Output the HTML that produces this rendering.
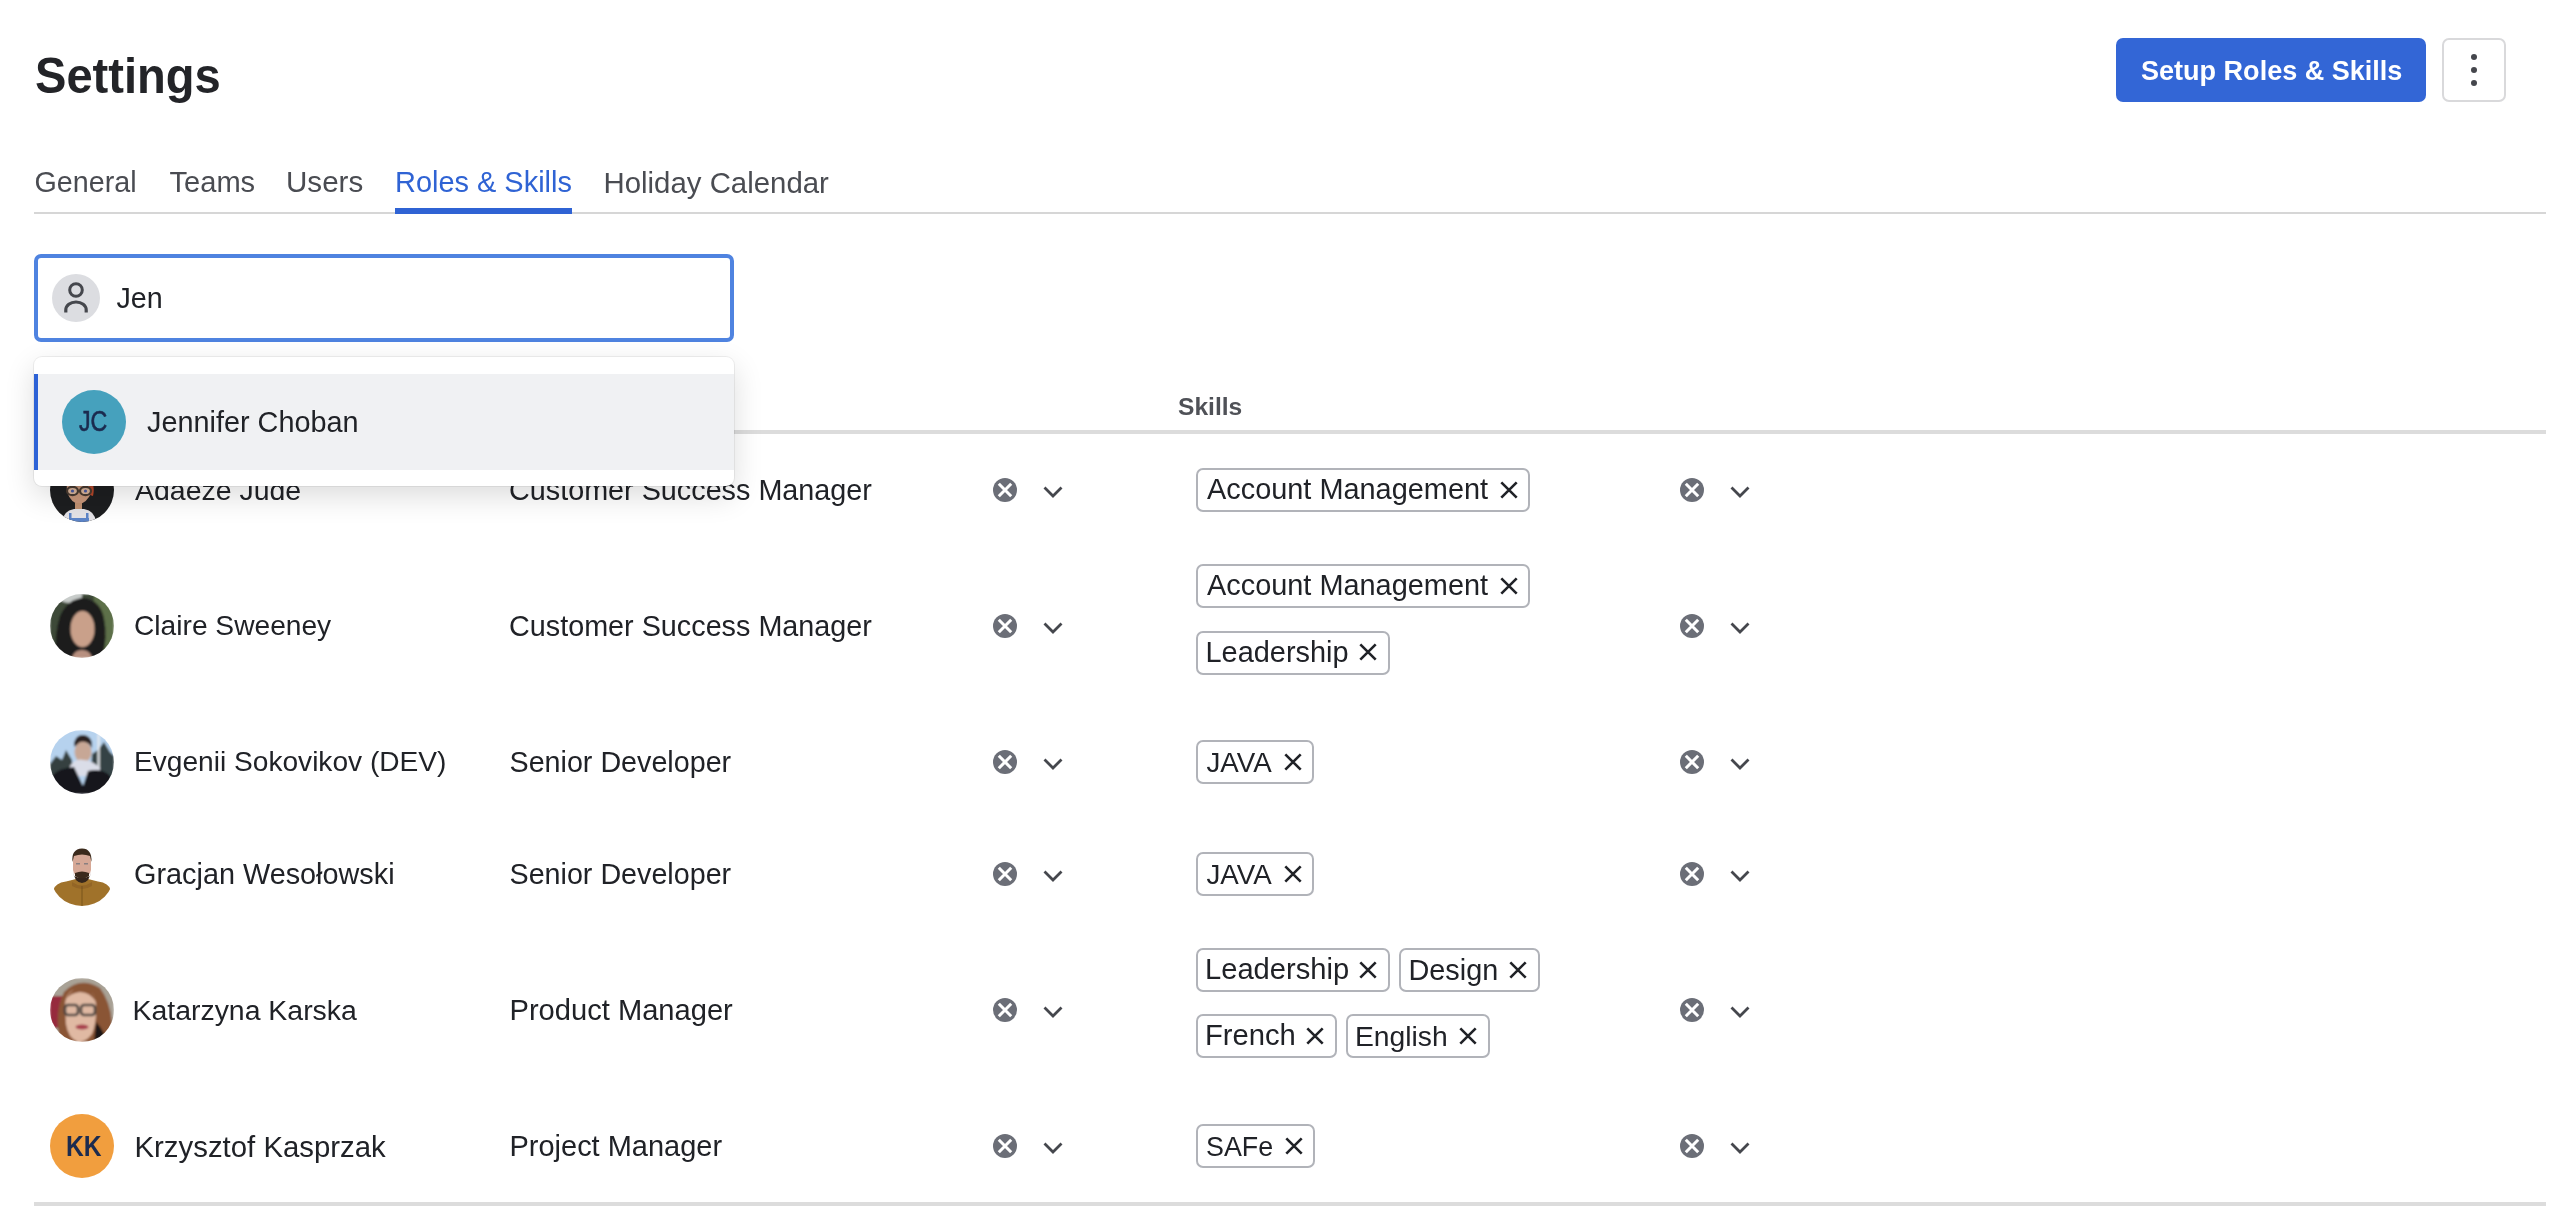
<!DOCTYPE html>
<html>
<head>
<meta charset="utf-8">
<style>
html,body{margin:0;padding:0;background:#fff;}
body{-webkit-font-smoothing:antialiased;will-change:transform;width:2573px;height:1224px;position:relative;overflow:hidden;font-family:"Liberation Sans",sans-serif;color:#202227;}
.a{position:absolute;white-space:nowrap;}
.tag{position:absolute;box-sizing:border-box;height:44px;border:2px solid #b1b3b9;border-radius:7px;background:#fff;}
</style>
</head>
<body>
<div class="a" id="k0" style="left:34.50px;top:45.65px;font-size:49.50px;line-height:59px;color:#232428;font-weight:bold;transform:scaleX(0.951);transform-origin:0 0;">Settings</div>
<div class="a" style="left:2116px;top:38px;width:310px;height:64px;background:#3366d6;border-radius:7px;"></div>
<div class="a" id="k1" style="left:2141.00px;top:54.63px;font-size:27.04px;line-height:32px;color:#ffffff;font-weight:bold;">Setup Roles &amp; Skills</div>
<div class="a" style="left:2442px;top:38px;width:64px;height:64px;box-sizing:border-box;border:2px solid #d9d9db;border-radius:7px;background:#fff;"></div>
<div class="a" style="left:2471px;top:54px;width:6px;height:6px;border-radius:50%;background:#45474d;"></div>
<div class="a" style="left:2471px;top:67px;width:6px;height:6px;border-radius:50%;background:#45474d;"></div>
<div class="a" style="left:2471px;top:80px;width:6px;height:6px;border-radius:50%;background:#45474d;"></div>
<div class="a" id="k2" style="left:34.50px;top:165.35px;font-size:28.71px;line-height:34px;color:#4a4c52;">General</div>
<div class="a" id="k3" style="left:169.50px;top:164.72px;font-size:29.09px;line-height:35px;color:#4a4c52;">Teams</div>
<div class="a" id="k4" style="left:286.00px;top:164.05px;font-size:29.59px;line-height:36px;color:#4a4c52;">Users</div>
<div class="a" id="k5" style="left:395.00px;top:164.77px;font-size:28.94px;line-height:35px;color:#2f63d4;">Roles &amp; Skills</div>
<div class="a" id="k6" style="left:603.50px;top:164.62px;font-size:29.38px;line-height:35px;color:#4a4c52;">Holiday Calendar</div>
<div class="a" style="left:34px;top:212px;width:2512px;height:2px;background:#d6d6d6;"></div>
<div class="a" style="left:395px;top:208px;width:177px;height:6px;background:#2f63d4;"></div>
<div class="a" id="k7" style="left:1178.00px;top:392.48px;font-size:24.58px;line-height:29px;color:#4f5157;font-weight:bold;">Skills</div>
<div class="a" style="left:34px;top:430px;width:2512px;height:4px;background:#dcdcdc;"></div>
<div class="a" style="left:34px;top:1202px;width:2512px;height:4px;background:#dcdcdc;"></div>
<svg class="a" style="left:50px;top:458px;" width="64" height="64" viewBox="0 0 64 64"><defs><clipPath id="c1"><circle cx="32" cy="32" r="32"/></clipPath><filter id="b1"><feGaussianBlur stdDeviation="0.7"/></filter></defs><g clip-path="url(#c1)"><rect width="64" height="64" fill="#1d1e20"/><g filter="url(#b1)"><path d="M16 10 Q29 0 42 10 L41.5 34 Q37 45 29 46 Q21 45 17 34 Z" fill="#c8967a"/><path d="M37 22 Q46 24 43 38 L40 37 Q42 28 35 25Z" fill="#b5462a"/><ellipse cx="22.5" cy="33" rx="5.5" ry="4.2" fill="#d9b49a" stroke="#4a3a30" stroke-width="2.2"/><ellipse cx="35.5" cy="33" rx="5.5" ry="4.2" fill="#d9b49a" stroke="#4a3a30" stroke-width="2.2"/><circle cx="22.5" cy="33" r="1.6" fill="#4a5aa0"/><circle cx="35.5" cy="33" r="1.6" fill="#4a5aa0"/><rect x="25" y="45" width="7" height="7" fill="#c09070"/><path d="M12 64 Q13 53 24 51 L34 51 Q45 53 46 64 Z" fill="#e4e2e6"/><rect x="19" y="60" width="20" height="4" fill="#5b84c8"/><rect x="19" y="55" width="2.5" height="6" fill="#5b84c8"/><rect x="36" y="55" width="2.5" height="6" fill="#5b84c8"/></g></g></svg>
<div class="a" id="k8" style="left:135.00px;top:473.34px;font-size:28.46px;line-height:34px;color:#202227;">Adaeze Jude</div>
<div class="a" id="k9" style="left:509.00px;top:472.73px;font-size:28.78px;line-height:35px;color:#202227;">Customer Success Manager</div>
<svg class="a" style="left:993.0px;top:478.0px;" width="24" height="24" viewBox="0 0 24 24"><circle cx="12" cy="12" r="12" fill="#6b6e77"/><path d="M5.8 5.8L18.2 18.2M18.2 5.8L5.8 18.2" stroke="#fff" stroke-width="3"/></svg>
<svg class="a" style="left:1041.0px;top:484.0px;" width="24" height="16" viewBox="0 0 24 16"><path d="M3.5 3.5L12 12L20.5 3.5" fill="none" stroke="#45474d" stroke-width="2.8"/></svg>
<svg class="a" style="left:1680.0px;top:478.0px;" width="24" height="24" viewBox="0 0 24 24"><circle cx="12" cy="12" r="12" fill="#6b6e77"/><path d="M5.8 5.8L18.2 18.2M18.2 5.8L5.8 18.2" stroke="#fff" stroke-width="3"/></svg>
<svg class="a" style="left:1728.0px;top:484.0px;" width="24" height="16" viewBox="0 0 24 16"><path d="M3.5 3.5L12 12L20.5 3.5" fill="none" stroke="#45474d" stroke-width="2.8"/></svg>
<div class="tag" style="left:1196.0px;top:468.0px;width:334.0px;"></div>
<div class="a" id="k10" style="left:1207.00px;top:472.49px;font-size:28.90px;line-height:35px;color:#202227;">Account Management</div>
<svg class="a" style="left:1499.8px;top:480.8px;" width="18" height="18" viewBox="0 0 18 18"><path d="M1.3 1.3L16.7 16.7M16.7 1.3L1.3 16.7" stroke="#202227" stroke-width="2.6"/></svg>
<svg class="a" style="left:50px;top:594px;" width="64" height="64" viewBox="0 0 64 64"><defs><clipPath id="c2"><circle cx="32" cy="32" r="32"/></clipPath><filter id="b2"><feGaussianBlur stdDeviation="1.3"/></filter></defs><g clip-path="url(#c2)"><g filter="url(#b2)"><rect width="64" height="64" fill="#3e4a38"/><rect x="44" y="0" width="20" height="64" fill="#5d7049"/><ellipse cx="20" cy="2" rx="12" ry="7" fill="#c8ccca"/><path d="M6 64 Q4 40 10 22 Q18 4 34 4 Q50 6 54 24 Q58 44 52 64 Z" fill="#1c1b1c"/><ellipse cx="32.5" cy="35" rx="12" ry="18" fill="#c9a08a"/><path d="M22 64 Q24 56 32 56 Q40 56 42 64Z" fill="#b89080"/><path d="M18 30 Q20 12 34 14 Q44 16 46 30 L46 20 Q40 8 30 8 Q20 10 18 22Z" fill="#1c1b1c"/></g></g></svg>
<div class="a" id="k11" style="left:134.00px;top:609.44px;font-size:28.16px;line-height:34px;color:#202227;">Claire Sweeney</div>
<div class="a" id="k12" style="left:509.00px;top:608.73px;font-size:28.78px;line-height:35px;color:#202227;">Customer Success Manager</div>
<svg class="a" style="left:993.0px;top:614.0px;" width="24" height="24" viewBox="0 0 24 24"><circle cx="12" cy="12" r="12" fill="#6b6e77"/><path d="M5.8 5.8L18.2 18.2M18.2 5.8L5.8 18.2" stroke="#fff" stroke-width="3"/></svg>
<svg class="a" style="left:1041.0px;top:620.0px;" width="24" height="16" viewBox="0 0 24 16"><path d="M3.5 3.5L12 12L20.5 3.5" fill="none" stroke="#45474d" stroke-width="2.8"/></svg>
<svg class="a" style="left:1680.0px;top:614.0px;" width="24" height="24" viewBox="0 0 24 24"><circle cx="12" cy="12" r="12" fill="#6b6e77"/><path d="M5.8 5.8L18.2 18.2M18.2 5.8L5.8 18.2" stroke="#fff" stroke-width="3"/></svg>
<svg class="a" style="left:1728.0px;top:620.0px;" width="24" height="16" viewBox="0 0 24 16"><path d="M3.5 3.5L12 12L20.5 3.5" fill="none" stroke="#45474d" stroke-width="2.8"/></svg>
<div class="tag" style="left:1196.0px;top:564.0px;width:334.0px;"></div>
<div class="a" id="k13" style="left:1207.00px;top:568.49px;font-size:28.90px;line-height:35px;color:#202227;">Account Management</div>
<svg class="a" style="left:1499.8px;top:576.8px;" width="18" height="18" viewBox="0 0 18 18"><path d="M1.3 1.3L16.7 16.7M16.7 1.3L1.3 16.7" stroke="#202227" stroke-width="2.6"/></svg>
<div class="tag" style="left:1196.0px;top:630.5px;width:193.5px;"></div>
<div class="a" id="k14" style="left:1205.50px;top:634.98px;font-size:28.92px;line-height:35px;color:#202227;">Leadership</div>
<svg class="a" style="left:1359.3px;top:643.3px;" width="18" height="18" viewBox="0 0 18 18"><path d="M1.3 1.3L16.7 16.7M16.7 1.3L1.3 16.7" stroke="#202227" stroke-width="2.6"/></svg>
<svg class="a" style="left:50px;top:730px;" width="64" height="64" viewBox="0 0 64 64"><defs><clipPath id="c3"><circle cx="32" cy="32" r="32"/></clipPath><filter id="b3"><feGaussianBlur stdDeviation="1.1"/></filter></defs><g clip-path="url(#c3)"><g filter="url(#b3)"><rect width="64" height="64" fill="#b6d2ee"/><path d="M0 34 L6 26 L12 30 L16 20 L22 30 L24 64 L0 64Z" fill="#34403f"/><path d="M40 64 L42 24 L48 20 L54 12 L60 22 L64 26 L64 64Z" fill="#344244"/><rect x="47.5" y="4" width="2.2" height="36" fill="#e8ecf0"/><path d="M24 16 Q24 6 33 5 Q42 6 42 16 L42 12 Z" fill="#2a2220"/><ellipse cx="33" cy="22" rx="8.5" ry="10.5" fill="#c7a796"/><path d="M24 17 Q24 5 33 5 Q43 6 42 18 Q38 11 32 11 Q27 12 24 17Z" fill="#2a2220"/><path d="M20 36 Q26 28 33 30 Q42 30 50 38 L50 46 L20 46Z" fill="#dadde8"/><path d="M0 64 L2 46 Q8 38 24 37 L33 56 L38 41 Q50 38 58 44 L64 50 L64 64Z" fill="#15171c"/></g></g></svg>
<div class="a" id="k15" style="left:134.00px;top:745.46px;font-size:28.11px;line-height:34px;color:#202227;">Evgenii Sokovikov (DEV)</div>
<div class="a" id="k16" style="left:509.50px;top:745.26px;font-size:28.70px;line-height:34px;color:#202227;">Senior Developer</div>
<svg class="a" style="left:993.0px;top:750.0px;" width="24" height="24" viewBox="0 0 24 24"><circle cx="12" cy="12" r="12" fill="#6b6e77"/><path d="M5.8 5.8L18.2 18.2M18.2 5.8L5.8 18.2" stroke="#fff" stroke-width="3"/></svg>
<svg class="a" style="left:1041.0px;top:756.0px;" width="24" height="16" viewBox="0 0 24 16"><path d="M3.5 3.5L12 12L20.5 3.5" fill="none" stroke="#45474d" stroke-width="2.8"/></svg>
<svg class="a" style="left:1680.0px;top:750.0px;" width="24" height="24" viewBox="0 0 24 24"><circle cx="12" cy="12" r="12" fill="#6b6e77"/><path d="M5.8 5.8L18.2 18.2M18.2 5.8L5.8 18.2" stroke="#fff" stroke-width="3"/></svg>
<svg class="a" style="left:1728.0px;top:756.0px;" width="24" height="16" viewBox="0 0 24 16"><path d="M3.5 3.5L12 12L20.5 3.5" fill="none" stroke="#45474d" stroke-width="2.8"/></svg>
<div class="tag" style="left:1196.0px;top:740.0px;width:118.0px;"></div>
<div class="a" id="k17" style="left:1206.50px;top:745.90px;font-size:27.71px;line-height:33px;color:#202227;">JAVA</div>
<svg class="a" style="left:1283.8px;top:752.8px;" width="18" height="18" viewBox="0 0 18 18"><path d="M1.3 1.3L16.7 16.7M16.7 1.3L1.3 16.7" stroke="#202227" stroke-width="2.6"/></svg>
<svg class="a" style="left:50px;top:842px;" width="64" height="64" viewBox="0 0 64 64"><defs><clipPath id="c4"><circle cx="32" cy="32" r="32"/></clipPath><filter id="b4"><feGaussianBlur stdDeviation="0.7"/></filter></defs><g clip-path="url(#c4)"><g filter="url(#b4)"><path d="M3.5 48 Q5 41 16 39.5 L26 37 Q32 41 38 37 L48 39.5 Q59 41 60.5 48 Q56 60 40 64 L24 64 Q8 60 3.5 48Z" fill="#a0722b"/><path d="M22 40 Q32 47 42 40 L42 44 Q32 50 22 44Z" fill="#8a5e22" opacity="0.6"/><path d="M31.5 44 L32.5 44 L32.5 64 L31.5 64Z" fill="#6a4a1a" opacity="0.7"/><path d="M23.5 30 Q24 40 32 41 Q40 40 40.5 30 L40 34 Q32 38 24 34Z" fill="#35251a"/><path d="M23 16 Q23 10 32 9.5 Q41 10 41 16 L41 28 Q40 35 32 36 Q24 35 23 28Z" fill="#d6a896"/><path d="M25 31 Q32 28 39 31 L39 34 Q32 39 25 34Z" fill="#3a2a1c"/><path d="M22.5 20 Q21 7 32 6.5 Q42 6.5 41.5 20 L40 14 Q32 11 24 14Z" fill="#3a2a1c"/><rect x="26" y="21" width="4" height="1.5" fill="#8a7f80"/><rect x="34" y="21" width="4" height="1.5" fill="#8a7f80"/></g></g></svg>
<div class="a" id="k18" style="left:134.00px;top:856.71px;font-size:28.84px;line-height:35px;color:#202227;">Gracjan Wesołowski</div>
<div class="a" id="k19" style="left:509.50px;top:857.26px;font-size:28.70px;line-height:34px;color:#202227;">Senior Developer</div>
<svg class="a" style="left:993.0px;top:862.0px;" width="24" height="24" viewBox="0 0 24 24"><circle cx="12" cy="12" r="12" fill="#6b6e77"/><path d="M5.8 5.8L18.2 18.2M18.2 5.8L5.8 18.2" stroke="#fff" stroke-width="3"/></svg>
<svg class="a" style="left:1041.0px;top:868.0px;" width="24" height="16" viewBox="0 0 24 16"><path d="M3.5 3.5L12 12L20.5 3.5" fill="none" stroke="#45474d" stroke-width="2.8"/></svg>
<svg class="a" style="left:1680.0px;top:862.0px;" width="24" height="24" viewBox="0 0 24 24"><circle cx="12" cy="12" r="12" fill="#6b6e77"/><path d="M5.8 5.8L18.2 18.2M18.2 5.8L5.8 18.2" stroke="#fff" stroke-width="3"/></svg>
<svg class="a" style="left:1728.0px;top:868.0px;" width="24" height="16" viewBox="0 0 24 16"><path d="M3.5 3.5L12 12L20.5 3.5" fill="none" stroke="#45474d" stroke-width="2.8"/></svg>
<div class="tag" style="left:1196.0px;top:852.0px;width:118.0px;"></div>
<div class="a" id="k20" style="left:1206.50px;top:857.90px;font-size:27.71px;line-height:33px;color:#202227;">JAVA</div>
<svg class="a" style="left:1283.8px;top:864.8px;" width="18" height="18" viewBox="0 0 18 18"><path d="M1.3 1.3L16.7 16.7M16.7 1.3L1.3 16.7" stroke="#202227" stroke-width="2.6"/></svg>
<svg class="a" style="left:50px;top:978px;" width="64" height="64" viewBox="0 0 64 64"><defs><clipPath id="c5"><circle cx="32" cy="32" r="32"/></clipPath><filter id="b5"><feGaussianBlur stdDeviation="1.3"/></filter></defs><g clip-path="url(#c5)"><g filter="url(#b5)"><rect width="64" height="64" fill="#a9a296"/><rect x="0" y="18" width="13" height="32" fill="#962a3c"/><path d="M10 64 Q4 34 14 14 Q30 -2 50 10 Q62 26 62 50 Q60 64 50 64Z" fill="#8a5434"/><path d="M15 26 Q16 11 31 10 Q45 11 46 26 Q47 44 42 56 Q36 64 28 64 Q18 60 16 46Z" fill="#e0b9a3"/><path d="M15 22 Q22 8 34 9 Q44 12 46 24 Q40 14 30 14 Q20 15 15 22Z" fill="#8a5434"/><rect x="15" y="27" width="13" height="10" rx="3" fill="none" stroke="#4b4440" stroke-width="2.6"/><rect x="31" y="27" width="14" height="10" rx="3" fill="none" stroke="#4b4440" stroke-width="2.6"/><ellipse cx="32" cy="49" rx="6.5" ry="2.4" fill="#a8404e"/><path d="M44 64 L46 44 Q52 50 58 64Z" fill="#1a1614"/></g></g></svg>
<div class="a" id="k21" style="left:132.50px;top:993.35px;font-size:28.43px;line-height:34px;color:#202227;">Katarzyna Karska</div>
<div class="a" id="k22" style="left:509.50px;top:992.61px;font-size:29.11px;line-height:35px;color:#202227;">Product Manager</div>
<svg class="a" style="left:993.0px;top:998.0px;" width="24" height="24" viewBox="0 0 24 24"><circle cx="12" cy="12" r="12" fill="#6b6e77"/><path d="M5.8 5.8L18.2 18.2M18.2 5.8L5.8 18.2" stroke="#fff" stroke-width="3"/></svg>
<svg class="a" style="left:1041.0px;top:1004.0px;" width="24" height="16" viewBox="0 0 24 16"><path d="M3.5 3.5L12 12L20.5 3.5" fill="none" stroke="#45474d" stroke-width="2.8"/></svg>
<svg class="a" style="left:1680.0px;top:998.0px;" width="24" height="24" viewBox="0 0 24 24"><circle cx="12" cy="12" r="12" fill="#6b6e77"/><path d="M5.8 5.8L18.2 18.2M18.2 5.8L5.8 18.2" stroke="#fff" stroke-width="3"/></svg>
<svg class="a" style="left:1728.0px;top:1004.0px;" width="24" height="16" viewBox="0 0 24 16"><path d="M3.5 3.5L12 12L20.5 3.5" fill="none" stroke="#45474d" stroke-width="2.8"/></svg>
<div class="tag" style="left:1196.0px;top:948.0px;width:193.5px;"></div>
<div class="a" id="k23" style="left:1205.00px;top:952.41px;font-size:29.13px;line-height:35px;color:#202227;">Leadership</div>
<svg class="a" style="left:1359.3px;top:960.8px;" width="18" height="18" viewBox="0 0 18 18"><path d="M1.3 1.3L16.7 16.7M16.7 1.3L1.3 16.7" stroke="#202227" stroke-width="2.6"/></svg>
<div class="tag" style="left:1398.5px;top:948.0px;width:141.0px;"></div>
<div class="a" id="k24" style="left:1408.50px;top:952.51px;font-size:28.83px;line-height:35px;color:#202227;">Design</div>
<svg class="a" style="left:1509.3px;top:960.8px;" width="18" height="18" viewBox="0 0 18 18"><path d="M1.3 1.3L16.7 16.7M16.7 1.3L1.3 16.7" stroke="#202227" stroke-width="2.6"/></svg>
<div class="tag" style="left:1196.0px;top:1014.0px;width:140.5px;"></div>
<div class="a" id="k25" style="left:1205.00px;top:1018.39px;font-size:29.19px;line-height:35px;color:#202227;">French</div>
<svg class="a" style="left:1306.3px;top:1026.8px;" width="18" height="18" viewBox="0 0 18 18"><path d="M1.3 1.3L16.7 16.7M16.7 1.3L1.3 16.7" stroke="#202227" stroke-width="2.6"/></svg>
<div class="tag" style="left:1345.5px;top:1014.0px;width:144.0px;"></div>
<div class="a" id="k26" style="left:1355.00px;top:1019.20px;font-size:28.27px;line-height:34px;color:#202227;">English</div>
<svg class="a" style="left:1459.3px;top:1026.8px;" width="18" height="18" viewBox="0 0 18 18"><path d="M1.3 1.3L16.7 16.7M16.7 1.3L1.3 16.7" stroke="#202227" stroke-width="2.6"/></svg>
<div class="a" style="left:50px;top:1114px;width:64px;height:64px;border-radius:50%;background:#f19e3e;"></div><div class="a" id="kk" style="left:66px;top:calc(1114px + 17px);font-size:29px;line-height:30px;font-weight:bold;color:#1c2b4f;transform:scaleX(0.85);transform-origin:0 0;">KK</div>
<div class="a" id="k27" style="left:134.50px;top:1128.53px;font-size:29.36px;line-height:35px;color:#202227;">Krzysztof Kasprzak</div>
<div class="a" id="k28" style="left:509.50px;top:1128.66px;font-size:28.97px;line-height:35px;color:#202227;">Project Manager</div>
<svg class="a" style="left:993.0px;top:1134.0px;" width="24" height="24" viewBox="0 0 24 24"><circle cx="12" cy="12" r="12" fill="#6b6e77"/><path d="M5.8 5.8L18.2 18.2M18.2 5.8L5.8 18.2" stroke="#fff" stroke-width="3"/></svg>
<svg class="a" style="left:1041.0px;top:1140.0px;" width="24" height="16" viewBox="0 0 24 16"><path d="M3.5 3.5L12 12L20.5 3.5" fill="none" stroke="#45474d" stroke-width="2.8"/></svg>
<svg class="a" style="left:1680.0px;top:1134.0px;" width="24" height="24" viewBox="0 0 24 24"><circle cx="12" cy="12" r="12" fill="#6b6e77"/><path d="M5.8 5.8L18.2 18.2M18.2 5.8L5.8 18.2" stroke="#fff" stroke-width="3"/></svg>
<svg class="a" style="left:1728.0px;top:1140.0px;" width="24" height="16" viewBox="0 0 24 16"><path d="M3.5 3.5L12 12L20.5 3.5" fill="none" stroke="#45474d" stroke-width="2.8"/></svg>
<div class="tag" style="left:1196.0px;top:1124.0px;width:119.0px;"></div>
<div class="a" id="k29" style="left:1206.00px;top:1130.70px;font-size:26.83px;line-height:32px;color:#202227;">SAFe</div>
<svg class="a" style="left:1284.8px;top:1136.8px;" width="18" height="18" viewBox="0 0 18 18"><path d="M1.3 1.3L16.7 16.7M16.7 1.3L1.3 16.7" stroke="#202227" stroke-width="2.6"/></svg>
<div class="a" style="left:34px;top:254px;width:700px;height:88px;box-sizing:border-box;border:4px solid #4f83e0;border-radius:7px;background:#fff;"></div>
<svg class="a" style="left:52px;top:274px;" width="48" height="48" viewBox="0 0 48 48"><circle cx="24" cy="24" r="24" fill="#dcdde1"/><circle cx="24" cy="16" r="6.3" fill="none" stroke="#45474d" stroke-width="3"/><path d="M13.8 38.5 V36 A10.2 8 0 0 1 34.2 36 V38.5" fill="none" stroke="#45474d" stroke-width="3.2"/></svg>
<div class="a" id="k30" style="left:116.50px;top:281.36px;font-size:28.68px;line-height:34px;color:#202227;">Jen</div>
<div class="a" style="left:34px;top:357px;width:700px;height:129px;background:#fff;border-radius:8px;box-shadow:0 0 0 1px rgba(0,0,0,0.06),0 10px 30px rgba(0,0,0,0.14);overflow:hidden;"><div class="a" style="left:0;top:17px;width:700px;height:96px;background:#f0f1f3;"></div><div class="a" style="left:0;top:17px;width:4px;height:96px;background:#2d62d6;"></div><div class="a" style="left:28px;top:33px;width:64px;height:64px;border-radius:50%;background:#46a1bd;"></div><div class="a" id="jc" style="left:45px;top:49px;font-size:29px;line-height:30px;color:#1b2a4e;-webkit-text-stroke:0.6px #1b2a4e;transform:scaleX(0.8);transform-origin:0 0;">JC</div><div class="a" id="k31" style="left:113.00px;top:48.21px;font-size:28.84px;line-height:35px;color:#202227;">Jennifer Choban</div></div>
</body>
</html>
